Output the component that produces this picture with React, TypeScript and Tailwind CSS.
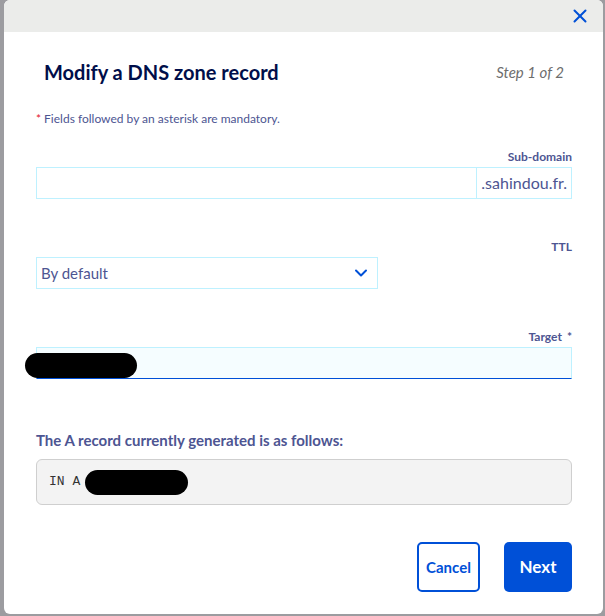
import { X, ChevronDown } from 'lucide-react'

const font = { fontFamily: 'Lato, "Noto Sans", sans-serif' }

function FieldLabel({ text, required }: { text: string; required?: boolean }) {
  return (
    <div className="flex justify-end h-[14px] items-center mb-[3px]">
      <span className="text-[12px] font-bold text-[#4d5592] leading-[14px]">
        {text}
        {required && <span className="ml-[5px]">*</span>}
      </span>
    </div>
  )
}

export default function App() {
  return (
    <div className="min-h-[616px] bg-[#9c9ca0] pl-[4px] pr-[2px] pb-[2px]" style={font}>
      {/* Modal */}
      <div className="bg-white rounded-md overflow-hidden h-[614px] flex flex-col">
        {/* Top bar */}
        <div className="h-[32px] bg-[#ebecea] flex items-center justify-end pr-[12px]">
          <X className="w-[22px] h-[22px] text-[#0050d7]" strokeWidth={2.2} />
        </div>

        <div className="pl-[32px] pr-[31px]">
          {/* Title */}
          <div className="flex items-center justify-between px-[8px] mt-[28px] h-[24px]">
            <h2 className="text-[20px] font-bold text-[#000e4a] leading-[24px]">
              Modify a DNS zone record
            </h2>
            <span className="text-[15px] italic text-[#6d6d6d]">Step 1 of 2</span>
          </div>

          <p className="mt-[28px] text-[12px] leading-[14px] text-[#4d5592]">
            <span className="text-[#e3142d] mr-[3px]">*</span>
            Fields followed by an asterisk are mandatory.
          </p>

          {/* Sub-domain */}
          <div className="mt-[24px]">
            <FieldLabel text="Sub-domain" />
            <div className="flex h-[32px] border border-[#bef1ff]">
              <div className="flex-1" />
              <div className="border-l border-[#bef1ff] flex items-center px-[4px] text-[16px] text-[#4d5592]">
                .sahindou.fr.
              </div>
            </div>
          </div>

          {/* TTL */}
          <div className="mt-[41px]">
            <FieldLabel text="TTL" />
            <div className="w-[342px] h-[32px] border border-[#bef1ff] flex items-center justify-between pl-[4px] pr-[6px]">
              <span className="text-[15px] text-[#4d5592]">By default</span>
              <ChevronDown className="w-[20px] h-[20px] text-[#0050d7]" strokeWidth={2.4} />
            </div>
          </div>

          {/* Target */}
          <div className="mt-[41px]">
            <FieldLabel text="Target" required />
            <div className="relative h-[32px] bg-[#f5fdff] border border-[#bef1ff] border-b-[#0050d7]">
              <div className="absolute left-[-12px] top-[5px] w-[112px] h-[25px] rounded-full bg-black" />
            </div>
          </div>

          {/* Generated record */}
          <p className="mt-[51px] text-[15px] font-bold text-[#4d5592] leading-[20px]">
            The A record currently generated is as follows:
          </p>
          <div className="mt-[9px] h-[46px] bg-[#f3f3f3] border border-[#cfcfcf] rounded-[6px] flex items-center pl-[12px]">
            <span
              className="text-[13px] text-[#333] whitespace-pre"
              style={{ fontFamily: '"Liberation Mono", monospace' }}
            >
              IN A
            </span>
            <div className="ml-[5px] w-[103px] h-[25px] rounded-full bg-black" />
          </div>

          {/* Actions */}
          <div className="mt-[37px] flex justify-end gap-[24px]">
            <button className="w-[63px] h-[50px] border-2 border-[#0050d7] rounded-[5px] text-[15px] font-bold text-[#0050d7]">
              Cancel
            </button>
            <button className="w-[68px] h-[50px] bg-[#0050d7] rounded-[5px] text-[17px] font-bold text-white">
              Next
            </button>
          </div>
        </div>
      </div>
    </div>
  )
}
